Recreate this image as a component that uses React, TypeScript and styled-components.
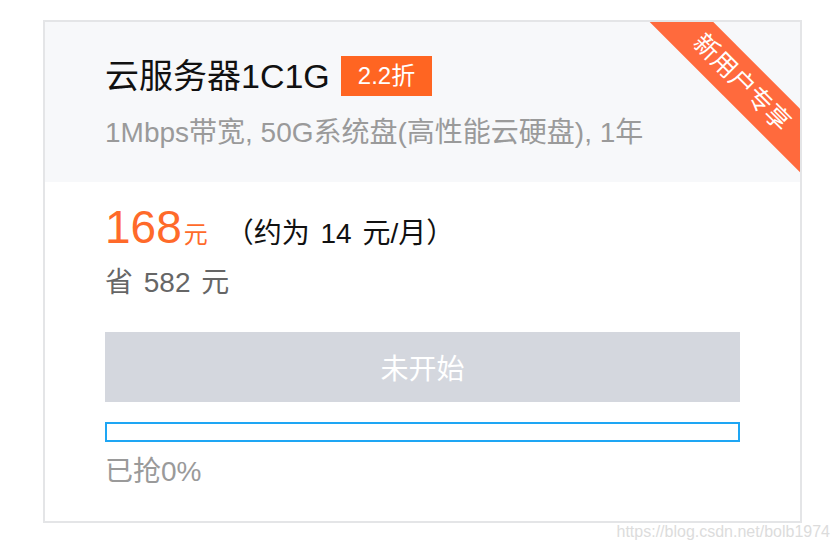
import React from "react";
import styled, { createGlobalStyle } from "styled-components";

const Global = createGlobalStyle`
  html, body {
    margin: 0;
    padding: 0;
    background: #ffffff;
  }
  body {
    font-family: "Liberation Sans", "Noto Sans CJK SC", sans-serif;
  }
`;

const Page = styled.div`
  position: relative;
  width: 840px;
  height: 550px;
  padding: 20px 0 0 43px;
  box-sizing: border-box;
  overflow: hidden;
`;

const Card = styled.div`
  position: relative;
  width: 759px;
  box-sizing: border-box;
  border: 2px solid #e4e5e7;
  background: #ffffff;
  overflow: hidden;
`;

const Header = styled.div`
  background: #f7f8fa;
  padding: 34px 60px 28px;
`;

const TitleRow = styled.div`
  display: flex;
  align-items: center;
  gap: 11px;
  height: 40px;
`;

const Title = styled.h2`
  margin: 0;
  font-size: 34px;
  line-height: 40px;
  font-weight: 400;
  color: #111111;
`;

const Badge = styled.span`
  display: inline-block;
  height: 40px;
  line-height: 40px;
  padding: 0 17px;
  background: #ff6522;
  color: #ffffff;
  font-size: 24px;
`;

const Spec = styled.p`
  margin: 16px 0 0;
  font-size: 28px;
  line-height: 42px;
  color: #9a9a9a;
`;

const Ribbon = styled.div`
  position: absolute;
  top: 38px;
  right: -52px;
  width: 220px;
  height: 45px;
  line-height: 45px;
  text-align: center;
  background: #ff6a3d;
  color: #ffffff;
  font-size: 25px;
  transform: rotate(45deg);
`;

const Body = styled.div`
  padding: 17px 60px 28px;
`;

const PriceRow = styled.div`
  display: flex;
  align-items: baseline;
  height: 56px;
`;

const Price = styled.span`
  font-size: 46px;
  line-height: 56px;
  color: #ff6a2a;
`;

const Unit = styled.span`
  margin-left: 2px;
  font-size: 24px;
  line-height: 1;
  color: #ff6a2a;
`;

const Monthly = styled.span`
  margin-left: 18px;
  font-size: 28px;
  line-height: 1;
  color: #111111;
  word-spacing: 3px;
`;

const Saving = styled.div`
  margin-top: 7px;
  font-size: 28px;
  line-height: 42px;
  color: #666666;
  word-spacing: 3px;
`;

const BuyButton = styled.button`
  display: block;
  width: 100%;
  height: 70px;
  margin-top: 28px;
  border: none;
  background: #d4d7de;
  color: #ffffff;
  font-family: inherit;
  font-size: 28px;
  cursor: not-allowed;
`;

const Progress = styled.div`
  margin-top: 20px;
  height: 20px;
  box-sizing: border-box;
  border: 2px solid #1ea6f4;
`;

const ProgressFill = styled.div`
  height: 100%;
  background: #1ea6f4;
`;

const Sold = styled.div`
  margin-top: 9px;
  font-size: 28px;
  line-height: 42px;
  color: #9a9a9a;
`;

const Watermark = styled.div`
  position: absolute;
  right: 10px;
  bottom: 9px;
  font-size: 16px;
  line-height: 18px;
  color: #dcdcdc;
`;

export default function App() {
  const sold = 0;
  return (
    <>
      <Global />
      <Page>
        <Card>
          <Header>
            <TitleRow>
              <Title>云服务器1C1G</Title>
              <Badge>2.2折</Badge>
            </TitleRow>
            <Spec>1Mbps带宽, 50G系统盘(高性能云硬盘), 1年</Spec>
          </Header>
          <Ribbon>新用户专享</Ribbon>
          <Body>
            <PriceRow>
              <Price>168</Price>
              <Unit>元</Unit>
              <Monthly>（约为 14 元/月）</Monthly>
            </PriceRow>
            <Saving>省 582 元</Saving>
            <BuyButton disabled>未开始</BuyButton>
            <Progress>
              <ProgressFill style={{ width: `${sold}%` }} />
            </Progress>
            <Sold>已抢{sold}%</Sold>
          </Body>
        </Card>
        <Watermark>https://blog.csdn.net/bolb1974</Watermark>
      </Page>
    </>
  );
}
